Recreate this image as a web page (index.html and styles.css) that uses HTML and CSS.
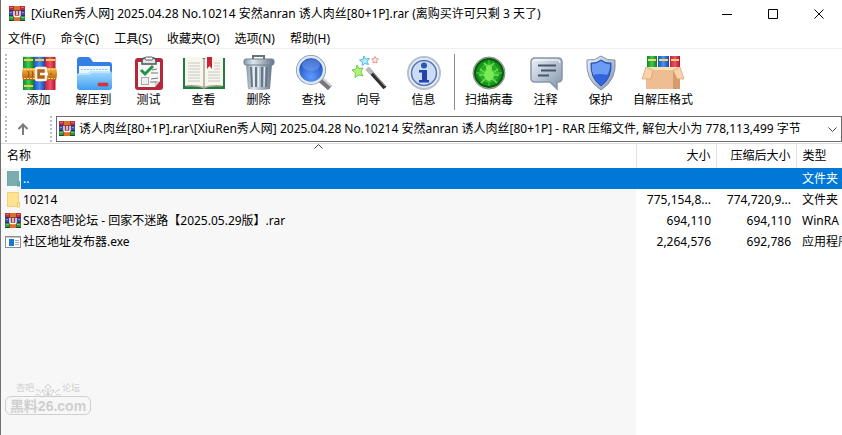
FILE: index.html
```html
<!DOCTYPE html>
<html lang="zh-CN">
<head>
    <meta charset="UTF-8">
    <meta name="viewport" content="width=device-width, initial-scale=1.0">
    <title>WinRAR</title>

    <link rel="stylesheet" href="styles.css">
</head>
<body>
    <!-- shared icons -->
    <svg class="defs" aria-hidden="true">
        <defs>
            <linearGradient id="steel" x1="0" y1="0" x2="1" y2="1">
                <stop offset="0" stop-color="#eef3f8"/>
                <stop offset="1" stop-color="#7f92ab"/>
            </linearGradient>
            <linearGradient id="bin" x1="0" x2="1">
                <stop offset="0" stop-color="#8795a5"/>
                <stop offset=".3" stop-color="#dfe6ec"/>
                <stop offset="1" stop-color="#66778b"/>
            </linearGradient>
            <linearGradient id="folder" x1="0" y1="0" x2="0" y2="1">
                <stop offset="0" stop-color="#a5dcff"/>
                <stop offset="1" stop-color="#3f9df0"/>
            </linearGradient>
            <radialGradient id="lens" cx=".5" cy=".75" r=".7">
                <stop offset="0" stop-color="#5f9bff"/>
                <stop offset="1" stop-color="#1746b4"/>
            </radialGradient>
            <radialGradient id="radar">
                <stop offset="0" stop-color="#3ccf2c"/>
                <stop offset="1" stop-color="#0b8a14"/>
            </radialGradient>
            <linearGradient id="red" x1="0" x2="1">
                <stop offset="0" stop-color="#c81f3a"/>
                <stop offset=".5" stop-color="#f0506a"/>
                <stop offset="1" stop-color="#b3132c"/>
            </linearGradient>
            <linearGradient id="green" x1="0" x2="1">
                <stop offset="0" stop-color="#0d8a2c"/>
                <stop offset=".5" stop-color="#3ccb52"/>
                <stop offset="1" stop-color="#0b7a26"/>
            </linearGradient>
            <linearGradient id="blue" x1="0" x2="1">
                <stop offset="0" stop-color="#1c55c4"/>
                <stop offset=".5" stop-color="#4d8ff0"/>
                <stop offset="1" stop-color="#1746a8"/>
            </linearGradient>
            <linearGradient id="belt" x1="0" y1="0" x2="0" y2="1">
                <stop offset="0" stop-color="#f5b443"/>
                <stop offset="1" stop-color="#b5600e"/>
            </linearGradient>
        </defs>
        <symbol id="rar" viewBox="0 0 16 16">
            <rect y="0" width="16" height="5" fill="#c8283c"/>
            <rect y="5" width="16" height="5" fill="#3a4cc0"/>
            <rect y="10" width="16" height="5" fill="#249a3c"/>
            <path d="M0 4.500h16M0 9.500h16M0 14.500h16" stroke="#3a3438"/>
            <path d="M1 1.500h3M12 1.500h3" stroke="#e36a70"/>
            <path d="M1 6.500h2M13 6.500h2" stroke="#7f92e8"/>
            <path d="M1 11.500h3M12 11.500h3" stroke="#5fcf6c"/>
            <rect x="5" y="0" width="6" height="15" fill="#d9702a"/>
            <path d="M4.500 0v15M11.500 0v15" stroke="#7a4030" stroke-width=".6"/>
            <rect x="4" y="4" width="8" height="7" fill="#8c3f4c"/>
            <path d="M5 5v4.500q0 1 1 1h4q1 0 1-1V5M8 5v4" fill="none" stroke="#fff" stroke-width="1.300"/>
        </symbol>
        <symbol id="dir" viewBox="0 0 16 16">
            <path d="M2 0h12v15H2z" fill="#ffe391"/>
            <path d="M2.500.5h11v14h-11z" fill="none" stroke="#f0d07a"/>
            <path d="M12 10h3v5.500h-3z" fill="#edc763"/>
            <path d="M13 10.500h1V15h-1z" fill="#fff0be"/>
        </symbol>
        <symbol id="dir-on" viewBox="0 0 16 16">
            <path d="M2 0h12v15H2z" fill="#7aadaf"/>
            <path d="M2 0h1v15H2zM12 10h3v5.500h-3z" fill="#6fa3a6"/>
        </symbol>
        <symbol id="exe" viewBox="0 0 16 16">
            <rect x=".5" y="2.500" width="15" height="11" fill="#fff" stroke="#8b8f94"/>
            <path d="M1 3.500h14" stroke="#c3c7cb"/>
            <rect x="4" y="5" width="5" height="7" fill="#1678d2"/>
            <path d="M10 6.500h4M10 8.500h4M10 10.500h4" stroke="#a6b0ba"/>
        </symbol>
    </svg>

    <div class="window">
        <header class="titlebar">
            <svg class="icon16"><use href="#rar"/></svg>
            <h1 class="title">[XiuRen秀人网] 2025.04.28 No.10214 安然anran 诱人肉丝[80+1P].rar (离购买许可只剩 3 天了)</h1>
            <div class="controls">
                <button type="button" aria-label="最小化"><svg viewBox="0 0 11 11"><path d="M0 5.500h10"/></svg></button>
                <button type="button" aria-label="最大化"><svg viewBox="0 0 11 11"><path d="M.5.5h9v9h-9z"/></svg></button>
                <button type="button" aria-label="关闭"><svg viewBox="0 0 11 11"><path d="M.5.5l9 9M9.500.5l-9 9"/></svg></button>
            </div>
        </header>

        <nav class="menu">
            <button type="button">文件(F)</button>
            <button type="button">命令(C)</button>
            <button type="button">工具(S)</button>
            <button type="button">收藏夹(O)</button>
            <button type="button">选项(N)</button>
            <button type="button">帮助(H)</button>
        </nav>

        <div class="toolbar">
            <span class="grip"></span>
            <button type="button" class="tool">
                <svg viewBox="0 0 36 36">
                    <path d="M2 2h11v33H2z" fill="url(#green)"/>
                    <path d="M13 2h11v33H13z" fill="url(#blue)"/>
                    <path d="M24 2h10.500v33H24z" fill="url(#red)"/>
                    <path d="M3 5h9M14 5h9M25 5h9M3 31h9" stroke="#f0cf4a" stroke-width="2"/>
                    <path d="M2 1.500h32" stroke="#dfe5e3"/>
                    <path d="M2 13h33q2 6 0 12H2q-2-6 0-12z" fill="url(#belt)"/>
                    <path d="M3 14.500h31M3 23.500h31" stroke="#ffdc8c" stroke-dasharray="2 1"/>
                    <rect x="15" y="13" width="10" height="12" rx="1" fill="#b0621c" stroke="#fff4dc" stroke-width="2.500"/>
                    <path d="M19 19h8" stroke="#fff" stroke-width="2.500"/>
                    <path d="M7 16q2 3 0 6M11 16q2 3 0 6M30 18v2" fill="none" stroke="#994b0c"/>
                </svg>
                添加
            </button>
            <button type="button" class="tool">
                <svg viewBox="0 0 36 36">
                    <path d="M1 5q0-3 3-3h8q2 0 3 2l2 3h16q3 0 3 3v21q0 3-3 3H4q-3 0-3-3z" fill="#347ee4"/>
                    <path d="M3 11h31v10H3z" fill="#e9f5ff"/>
                    <path d="M5 14.500h27" stroke="#a3c2e4" stroke-dasharray="2 1"/>
                    <path d="M1 20q0-2 3-2h8l3-2h18q3 0 3 3v13q0 3-3 3H4q-3 0-3-3z" fill="url(#folder)"/>
                    <path d="M2 20q0-1 2-1h9l3-2h18" fill="none" stroke="#dff4ff"/>
                    <rect x="22" y="28" width="10" height="3" rx="1" fill="#e33434" stroke="#b81f2c" stroke-width=".5"/>
                </svg>
                解压到
            </button>
            <button type="button" class="tool">
                <svg viewBox="0 0 36 36">
                    <rect x="4" y="3" width="28" height="32" rx="3" fill="#b62839"/>
                    <path d="M7 7h22v19l-5 6H7z" fill="#f6f6f4"/>
                    <path d="M29 26l-5 6v-6z" fill="#c6c9cc"/>
                    <path d="M11 9V6q0-3 3-3h8q3 0 3 3v3z" fill="#e1e5e9" stroke="#4e5359" stroke-width="1.500"/>
                    <rect x="14" y="2" width="8" height="3" rx="1.500" fill="#fff" stroke="#555"/>
                    <rect x="10.500" y="22.500" width="7" height="7" fill="#eee" stroke="#aaa"/>
                    <path d="M10 15l4 4 8-8" fill="none" stroke="#219544" stroke-width="3"/>
                    <path d="M20 18h7M19 27h6M20 24l7-1M21 15l5-1" stroke="#777"/>
                </svg>
                测试
            </button>
            <button type="button" class="tool">
                <svg class="wide" viewBox="0 0 42 36">
                    <path d="M0 3h42v31H0z" fill="#1d7d3d"/>
                    <path d="M2 3q12-3 19 1 7-4 19-1v28q-12-1-19 2-7-3-19-2z" fill="#f8f7ef"/>
                    <path d="M21 4v29M3 31q12-1 18 2 6-3 18-2" fill="none" stroke="#a9a494" stroke-width="1.500"/>
                    <path d="M5 8h12M5 11h12M5 14h12M5 17h12M5 20h12M5 23h12M5 26h12M25 17h12M25 20h12M25 23h12M25 26h12M31 8h6M31 11h6M31 14h6" stroke="#c8c8c0"/>
                    <path d="M24 2h5v12l-2.500-3-2.500 3z" fill="#c92335"/>
                </svg>
                查看
            </button>
            <button type="button" class="tool">
                <svg viewBox="0 0 36 36">
                    <path d="M12 4V1h11v3" fill="none" stroke="#66727d" stroke-width="2"/>
                    <path d="M5 9h26l-2 25q-11 2-22 0z" fill="url(#bin)"/>
                    <path d="M10 12l1 20M15 12v20M21 12v20M26 12l-1 20" stroke="#66778a" stroke-width="2"/>
                    <path d="M12.500 12l.5 20M17.500 12v20M23.500 12l-.5 20" stroke="#edf2f5"/>
                    <rect x="3" y="4" width="30" height="6" rx="2" fill="url(#bin)" stroke="#71818f"/>
                </svg>
                删除
            </button>
            <button type="button" class="tool">
                <svg viewBox="0 0 36 36">
                    <path d="M25 25l9 8" stroke="#77777a" stroke-width="6"/>
                    <path d="M26 23l9 8" stroke="#d1d4d7" stroke-width="2"/>
                    <circle cx="15" cy="15" r="13.500" fill="url(#lens)" stroke="#7e93ad" stroke-width="3"/>
                    <circle cx="15" cy="15" r="13" fill="none" stroke="#dce7f1" stroke-width="2.500"/>
                    <ellipse cx="15" cy="10" rx="9" ry="6" fill="#7ca9f1" opacity=".45"/>
                </svg>
                查找
            </button>
            <button type="button" class="tool">
                <svg viewBox="0 0 36 36">
                    <path d="M17 14l17 19" stroke="#302f32" stroke-width="4"/>
                    <path d="M16 13l5 5.500" stroke="#b9babd" stroke-width="4.500"/>
                    <path d="M20 15l14 16" stroke="#a9a7ac"/>
                    <path d="M6 10l2 3.500 4-.5-2 4 2 4-4-1-4 2.500.5-4.500L1 15l4-1z" fill="#b4f07c" stroke="#72cc48"/>
                    <path d="M13 1l1.500 3 4-.5-2.500 3 1.500 3-3.500-1-3 2 .5-3.500-3-2 3.500-.5z" fill="#b4ecfc" stroke="#55b8e2"/>
                    <path d="M24 1.500l1 2 2.500.5-2 1.500.5 2.500-2-1-2 1 .5-2.500-2-1.500 2.500-.5z" fill="#fff0f0" stroke="#f09090"/>
                </svg>
                向导
            </button>
            <button type="button" class="tool">
                <svg viewBox="0 0 36 36">
                    <circle cx="18" cy="18" r="16" fill="#e8eef5" stroke="#b4c1d0" stroke-width="2"/>
                    <circle cx="18" cy="18" r="12.500" fill="#ccdcf2" stroke="#5574bb" stroke-width="1.500"/>
                    <circle cx="18" cy="10.500" r="3" fill="#2859b4"/>
                    <path d="M13 15h8v10h2v2.500H13V25h3v-7.500h-3z" fill="#2440b1"/>
                </svg>
                信息
            </button>
            <span class="sep"></span>
            <button type="button" class="tool">
                <svg viewBox="0 0 36 36">
                    <circle cx="18" cy="18" r="16" fill="#bfc7be" stroke="#828c80"/>
                    <circle cx="18" cy="18" r="14" fill="url(#radar)" stroke="#0a5912" stroke-width="2"/>
                    <path d="M18 5v26M5 18h26" stroke="#5fe050" stroke-width=".8"/>
                    <circle cx="18" cy="18" r="9" fill="none" stroke="#49bd37"/>
                    <ellipse cx="18" cy="20" rx="5" ry="6" fill="#7aea58"/>
                    <circle cx="18" cy="13" r="3" fill="#7aea58"/>
                    <path d="M13 17l-4-3M23 17l4-3M13 20H8M23 20h5M14 24l-4 4M22 24l4 4M16 11l-3-3M20 11l3-3" stroke="#74e055" stroke-width="1.500"/>
                </svg>
                扫描病毒
            </button>
            <button type="button" class="tool">
                <svg viewBox="0 0 36 36">
                    <path d="M7 3h23q4 0 4 4v16q0 4-4 4h-1v7l-7-7H7q-4 0-4-4V7q0-4 4-4z" fill="url(#steel)" stroke="#8796aa" stroke-width="1.500"/>
                    <path d="M7 5h22q3 0 3 3" fill="none" stroke="#fff"/>
                    <path d="M10 10.500h18M13 15.500h15M10 20.500h11" stroke="#46566e" stroke-width="2"/>
                </svg>
                注释
            </button>
            <button type="button" class="tool">
                <svg viewBox="0 0 36 36">
                    <path d="M18 1q6 5 14 4 2 20-14 30Q2 25 4 5q8 1 14-4z" fill="url(#steel)" stroke="#8292aa"/>
                    <path d="M18 5q5 4 10 3 1 15-10 23Q7 23 8 8q5 1 10-3z" fill="#3264dc"/>
                    <path d="M18 6q5 4 9 3 0 7-3 11-7-2-14 0Q8 16 9 9q5 0 9-3z" fill="#6b9df5"/>
                    <path d="M18 5q5 4 10 3 1 15-10 23Q7 23 8 8q5 1 10-3z" fill="none" stroke="#244da9"/>
                </svg>
                保护
            </button>
            <button type="button" class="tool">
                <svg class="wide" viewBox="0 0 42 36">
                    <path d="M5 1h10v15H5z" fill="url(#green)"/>
                    <path d="M16 1h11v15H16z" fill="url(#blue)"/>
                    <path d="M28 1h10v15H28z" fill="url(#red)"/>
                    <path d="M6 5h8M17 5h9M29 5h8" stroke="#f4d968" stroke-width="2"/>
                    <path d="M4 12h34v22H4z" fill="#d69a6c"/>
                    <path d="M4 14h27v20H4z" fill="#efbd92"/>
                    <path d="M4 12h34v3H4z" fill="#ffe1b2"/>
                    <path d="M4 12L0 24h9l2-9zM38 12l4 12h-7l-4-9z" fill="#f9d3a8" stroke="#d89c6c" stroke-width=".7"/>
                </svg>
                自解压格式
            </button>
        </div>

        <div class="addressbar">
            <span class="grip"></span>
            <button type="button" class="up" aria-label="上一级">
                <svg viewBox="0 0 12 12"><path d="M6 12V2M1.500 6L6 1.500 10.500 6" fill="none" stroke="#7b7b7b" stroke-width="2"/></svg>
            </button>
            <span class="grip"></span>
            <div class="combo">
                <svg class="icon16"><use href="#rar"/></svg>
                <select aria-label="路径">
                    <option>诱人肉丝[80+1P].rar\[XiuRen秀人网] 2025.04.28 No.10214 安然anran 诱人肉丝[80+1P] - RAR 压缩文件, 解包大小为 778,113,499 字节</option>
                </select>
                <svg class="arrow" viewBox="0 0 9 5"><path d="M.5.5l4 4 4-4"/></svg>
            </div>
        </div>

        <main class="list">
            <table>
                <thead>
                    <tr>
                        <th class="name">名称<svg class="sort" viewBox="0 0 9 5"><path d="M.5 4.500l4-4 4 4"/></svg></th>
                        <th class="num">大小</th>
                        <th class="num">压缩后大小</th>
                        <th class="type">类型</th>
                    </tr>
                </thead>
                <tbody>
                    <tr class="selected">
                        <td class="name"><div class="file"><svg class="icon16"><use href="#dir-on"/></svg><span>..</span></div></td>
                        <td class="num"></td>
                        <td class="num"></td>
                        <td class="type">文件夹</td>
                    </tr>
                    <tr>
                        <td class="name"><div class="file"><svg class="icon16"><use href="#dir"/></svg><span>10214</span></div></td>
                        <td class="num">775,154,8...</td>
                        <td class="num">774,720,9...</td>
                        <td class="type">文件夹</td>
                    </tr>
                    <tr>
                        <td class="name"><div class="file"><svg class="icon16"><use href="#rar"/></svg><span>SEX8杏吧论坛 - 回家不迷路【2025.05.29版】.rar</span></div></td>
                        <td class="num">694,110</td>
                        <td class="num">694,110</td>
                        <td class="type">WinRA</td>
                    </tr>
                    <tr>
                        <td class="name"><div class="file"><svg class="icon16"><use href="#exe"/></svg><span>社区地址发布器.exe</span></div></td>
                        <td class="num">2,264,576</td>
                        <td class="num">692,786</td>
                        <td class="type">应用程序</td>
                    </tr>
                </tbody>
            </table>

            <div class="watermark">
                <div class="mark-top">
                    <span>杏吧</span>
                    <svg viewBox="0 0 56 32" fill="none" stroke="#cfcfcf" stroke-width="2">
                        <path d="M1 28q6-9 11-3t10-1M55 28q-6-9-11-3t-10-1M28 28V14M28 24q-10 0-12-10 10 0 12 10 2-10 12-10-2 10-12 10M4 14q6-2 10 6M52 14q-6-2-10 6M22 8l6-5 6 5-6 6z"/>
                    </svg>
                    <span>论坛</span>
                </div>
                <div class="mark-name">黑料26.com</div>
            </div>
        </main>
    </div>
</body>
</html>
```
FILE: styles.css
```css
* {
    box-sizing: border-box;
}

body {
    margin: 0;
    font: 12px/16px "Noto Sans", "Noto Sans CJK SC", sans-serif;
    color: #000;
    background: #fff;
}

button,
select {
    margin: 0;
    padding: 0;
    border: 0;
    background: none;
    font: inherit;
    color: inherit;
}

svg {
    display: block;
    flex: none;
}

.defs {
    position: absolute;
    width: 0;
    height: 0;
}

.icon16 {
    width: 16px;
    height: 16px;
}

.window {
    display: flex;
    flex-direction: column;
    min-height: 100vh;
    border-left: 1px solid #77706f;
    overflow: hidden;
}

/* title */
.titlebar {
    display: flex;
    align-items: center;
    height: 28px;
    padding-left: 8px;
    gap: 6px;
}

.title {
    flex: 1;
    margin: 0;
    font-size: 12px;
    font-weight: normal;
    white-space: nowrap;
    overflow: hidden;
}

.controls {
    display: flex;
}

.controls button {
    display: flex;
    align-items: center;
    justify-content: center;
    width: 46px;
    height: 26px;
}

.controls svg {
    width: 11px;
    height: 11px;
    fill: none;
    stroke: #000;
}

/* menu */
.menu {
    display: flex;
    gap: 1px;
    height: 21px;
    border-bottom: 1px solid #f0f0f0;
}

.menu button {
    padding: 1px 7px 0;
}

/* toolbar */
.toolbar {
    display: flex;
    height: 62px;
    padding: 5px 4px 1px;
}

.grip {
    width: 2px;
    margin-right: 4px;
    background: repeating-linear-gradient(#bdbdbd 0 2px, #fff 2px 4px);
}

.tool {
    display: flex;
    flex-direction: column;
    align-items: center;
    gap: 1px;
    min-width: 55px;
    padding: 1px 5px 0;
    white-space: nowrap;
}

.tool svg {
    width: 36px;
    height: 36px;
}

.tool .wide {
    width: 42px;
}

.sep {
    width: 1px;
    margin: 0 5px 0 3px;
    background: #8c8c8c;
}

/* address */
.addressbar {
    display: flex;
    height: 33px;
    padding: 5px 0 1px 4px;
    border-bottom: 1px solid #dcdcdc;
}

.up {
    display: flex;
    align-items: center;
    width: 39px;
    padding-left: 6px;
}

.up svg {
    width: 12px;
    height: 12px;
}

.combo {
    flex: 1;
    display: flex;
    align-items: center;
    min-width: 0;
    padding: 0 4px 0 2px;
    border: 1px solid #6e6a6e;
}

.combo select {
    flex: 1;
    min-width: 0;
    height: 24px;
    padding-left: 4px;
    appearance: none;
    outline: 0;
}

.arrow,
.sort {
    width: 9px;
    height: 5px;
    fill: none;
    stroke: #444;
}

/* file list */
.list {
    flex: 1;
    position: relative;
    background: linear-gradient(to right, #f7f7f7 calc(100% - 206px), #fff 0);
}

.list table {
    width: 100%;
    table-layout: fixed;
    border-collapse: collapse;
}

th,
td {
    height: 21px;
    padding: 0;
    font-weight: normal;
    text-align: left;
    white-space: nowrap;
    overflow: hidden;
}

th {
    position: relative;
    height: 24px;
    background: #fff;
    border-right: 1px solid #e2e2e2;
}

th.name {
    padding-left: 6px;
}

th.type {
    width: 46px;
    border-right: 0;
}

.type {
    padding-left: 6px;
}

.num {
    width: 80px;
    padding-right: 5px;
    text-align: right;
}

.sort {
    position: absolute;
    top: 0;
    left: calc(50% - 4px);
}

.file {
    display: flex;
    align-items: center;
    height: 21px;
    padding-left: 4px;
}

.file span {
    flex: 1;
    padding-left: 2px;
    line-height: 21px;
}

.selected td,
.selected .file span {
    color: #fff;
    background: #0078d7;
}

.selected td.name {
    background: none;
}

/* watermark */
.watermark {
    position: absolute;
    left: 4px;
    bottom: 20px;
    width: 86px;
    color: #cfcfcf;
}

.mark-top {
    display: flex;
    justify-content: center;
    height: 13px;
    font-size: 9px;
    line-height: 10px;
}

.mark-top svg {
    width: 28px;
    height: 16px;
}

.mark-name {
    height: 19px;
    border: 1px solid #cfcfcf;
    border-radius: 6px;
    font: bold 14px/18px "Liberation Sans", "Noto Sans CJK SC", sans-serif;
    text-align: center;
}
```
